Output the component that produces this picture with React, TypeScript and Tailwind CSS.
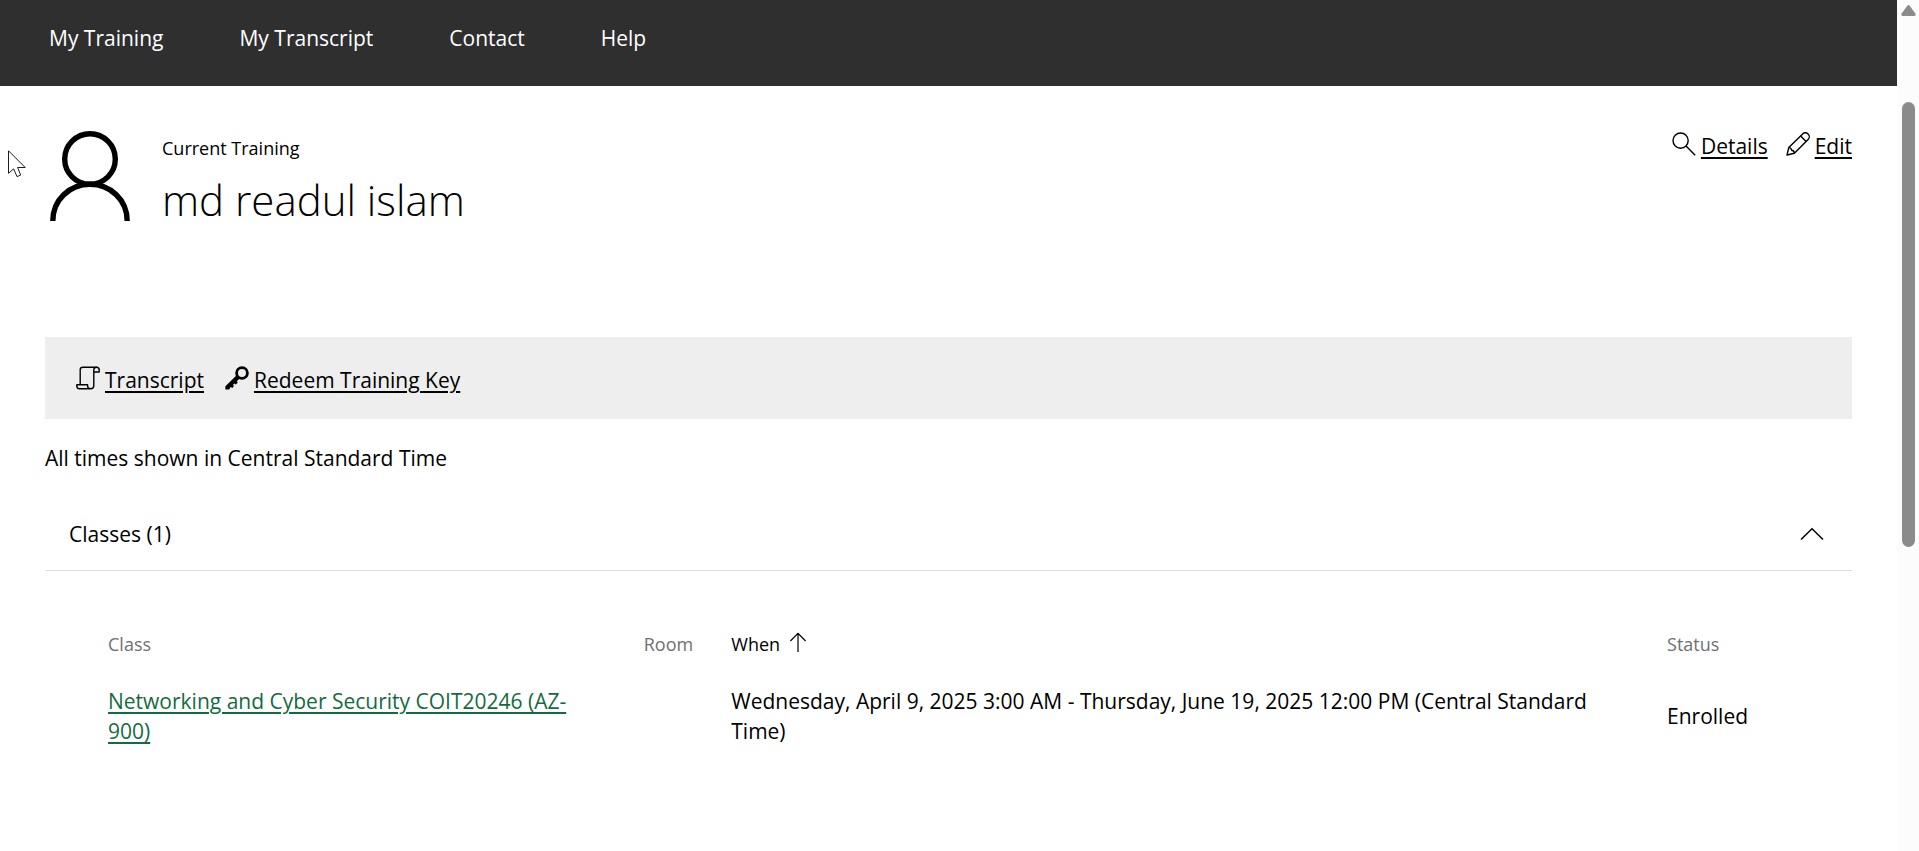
import React, { useState } from "react";

type IconProps = { className?: string };

function PersonIcon() {
  return (
    <svg viewBox="0 0 80 90" className="h-[90px] w-20" fill="none" stroke="#000" strokeWidth="5.4" role="img" aria-label="Profile">
      <circle cx="40" cy="28" r="25.3" />
      <path d="M2.8 90 C2.8 69 19.5 53.3 40 53.3 S77.2 69 77.2 90" />
    </svg>
  );
}

function SearchIcon({ className }: IconProps) {
  return (
    <svg viewBox="0 0 24 24" className={className} fill="none" stroke="currentColor" strokeWidth="1.4" aria-hidden="true">
      <circle cx="8.6" cy="8.6" r="7.6" />
      <path d="M14 14 L23.2 23.2" />
    </svg>
  );
}

function PencilIcon({ className }: IconProps) {
  return (
    <svg viewBox="0 0 24 24" className={className} fill="none" stroke="currentColor" strokeWidth="1.4" strokeLinejoin="round" aria-hidden="true">
      <path d="M1 23 L2.8 15.6 L16.6 1.9 A3.8 3.8 0 0 1 22.1 7.4 L8.4 21.2 Z" />
      <path d="M14.6 3.9 L20.1 9.4 M2.8 15.6 Q5.4 15.8 5.7 18.3 Q8.2 18.6 8.4 21.2" />
    </svg>
  );
}

function ScrollIcon({ className }: IconProps) {
  return (
    <svg viewBox="0 0 24 24" className={className} fill="none" stroke="currentColor" strokeWidth="1.4" strokeLinejoin="round" aria-hidden="true">
      <path d="M4.2 18.8 V3.6 Q4.2 1.2 6.8 1.2 H20.6 Q23.2 1.2 23.2 4 V6 H17.8" />
      <path d="M20.6 1.2 Q17.8 1.2 17.8 4 V19.8 Q17.8 22.8 14.6 22.8 H3.4 Q0.8 22.8 0.8 20 V18.8 H11.6 V20 Q11.6 22.8 14.6 22.8" />
    </svg>
  );
}

function KeyIcon({ className }: IconProps) {
  return (
    <svg viewBox="0 0 24 24" className={className} aria-hidden="true">
      <circle cx="17" cy="7" r="5.4" fill="none" stroke="currentColor" strokeWidth="2.8" />
      <path d="M11.4 9.4 L14.6 12.6 L11.8 15.2 L12.8 16.6 L10.8 18.4 L9.2 17.4 L8.2 18.6 L8.8 20.2 L7.4 22 L5.6 21 L4.2 23.4 L0.4 23.6 L0.4 20.2 Z" fill="currentColor" />
    </svg>
  );
}

function ChevronUpIcon() {
  return (
    <svg viewBox="0 0 24 14" className="h-[14px] w-6" fill="none" stroke="#000" strokeWidth="1.5" aria-hidden="true">
      <path d="M1 12.5 L12 1.8 L23 12.5" />
    </svg>
  );
}

function SortUpIcon() {
  return (
    <svg viewBox="0 0 18 20" className="mb-1 h-5 w-[18px]" fill="none" stroke="#000" strokeWidth="1.2" aria-hidden="true">
      <path d="M9 20 V1.2 M1.4 9 L9 1.4 L16.6 9" />
    </svg>
  );
}

const navItems = ["My Training", "My Transcript", "Contact", "Help"];

const linkText = "underline decoration-2 underline-offset-3";

function ActionLink({ icon, label }: { icon: React.ReactNode; label: string }) {
  return (
    <a href="#" className="flex items-start gap-[5px]">
      {icon}
      <span className={linkText}>{label}</span>
    </a>
  );
}

export default function App() {
  const [open, setOpen] = useState(true);
  return (
    <div className="relative flex min-h-screen bg-white font-['Open_Sans','Noto_Sans',sans-serif] text-[21px] leading-[30px] text-black">
      <div className="min-w-0 flex-1">
        <nav className="flex h-[86px] gap-[76px] bg-[#2f2f2f] px-[49px] pt-[23px] text-white">
          {navItems.map((item) => (
            <a key={item} href="#">{item}</a>
          ))}
        </nav>

        <main className="px-[45px] pt-[45px]">
          <header className="flex items-start justify-between">
            <div className="flex gap-8 pl-[5px]">
              <PersonIcon />
              <div className="pt-1">
                <p className="text-[18px] leading-[26px]">Current Training</p>
                <h1 className="pt-[9px] text-[42px] leading-[60px] font-light">md readul islam</h1>
              </div>
            </div>
            <div className="flex gap-[18px]">
              <ActionLink icon={<SearchIcon className="mt-px h-6 w-6" />} label="Details" />
              <ActionLink icon={<PencilIcon className="mt-px h-6 w-6" />} label="Edit" />
            </div>
          </header>

          <div className="mt-[107px] flex h-[82px] items-center gap-[21px] bg-[#eeeeee] px-[31px] pt-1">
            <ActionLink icon={<ScrollIcon className="mt-px h-6 w-6" />} label="Transcript" />
            <ActionLink icon={<KeyIcon className="mt-px h-6 w-6" />} label="Redeem Training Key" />
          </div>

          <p className="mt-6">All times shown in Central Standard Time</p>

          <section className="mt-[26px]">
            <h2 className="border-b border-[#dddddd]">
              <button
                type="button"
                aria-expanded={open}
                onClick={() => setOpen(!open)}
                className="flex h-[71px] w-full items-center justify-between pr-7 pb-[2px] pl-6"
              >
                <span>Classes (1)</span>
                <ChevronUpIcon />
              </button>
            </h2>

            {open && (
              <div className="px-[45px] pt-[54px]">
                <table className="w-full table-fixed text-left">
                  <colgroup>
                    <col className="w-[31.2%]" />
                    <col className="w-[5.1%]" />
                    <col className="w-[54.5%]" />
                    <col />
                  </colgroup>
                  <thead>
                    <tr className="h-[61px] align-top text-[18px] text-[#707070]">
                      <th scope="col" className="px-[18px] pt-1 font-normal">Class</th>
                      <th scope="col" className="pt-1 pl-[18px] font-normal">Room</th>
                      <th scope="col" aria-sort="ascending" className="px-[18px] pt-1 font-normal text-black">
                        <button type="button" className="flex items-center gap-[9px]">
                          When
                          <SortUpIcon />
                        </button>
                      </th>
                      <th scope="col" className="px-[18px] pt-1 font-normal">Status</th>
                    </tr>
                  </thead>
                  <tbody>
                    <tr>
                      <td className="px-[18px]">
                        <a href="#" className="text-[#146b43] underline decoration-2 underline-offset-3">
                          Networking and Cyber Security COIT20246 (AZ-900)
                        </a>
                      </td>
                      <td />
                      <td className="px-[18px]">
                        Wednesday, April 9, 2025 3:00 AM - Thursday, June 19, 2025 12:00 PM (Central Standard Time)
                      </td>
                      <td className="px-[18px]">Enrolled</td>
                    </tr>
                  </tbody>
                </table>
              </div>
            )}
          </section>
        </main>
      </div>

      <div className="flex w-[22px] shrink-0 flex-col items-center bg-[#fcfcfc] pt-[5px]" aria-hidden="true">
        <svg viewBox="0 0 15 11" className="h-[11px] w-[15px]" fill="#8b8b8b">
          <path d="M6.3 0.7 Q7.5 -0.5 8.7 0.7 L14.4 8.4 Q15.4 11 13 11 H2 Q-0.4 11 0.6 8.4 Z" />
        </svg>
        <div className="mt-[86px] h-[445px] w-[13px] rounded-full bg-[#8b8b8b]" />
      </div>

      <svg viewBox="0 0 18 28" className="absolute top-[150px] left-2 h-7 w-[18px]" fill="#fff" stroke="#1a1a2a" strokeWidth="1" aria-hidden="true">
        <path d="M0.5 0.8 V23.3 L5.6 18.9 L9 26.6 L12.7 25.1 L9.6 17.5 H17.2 Z" />
      </svg>
    </div>
  );
}
